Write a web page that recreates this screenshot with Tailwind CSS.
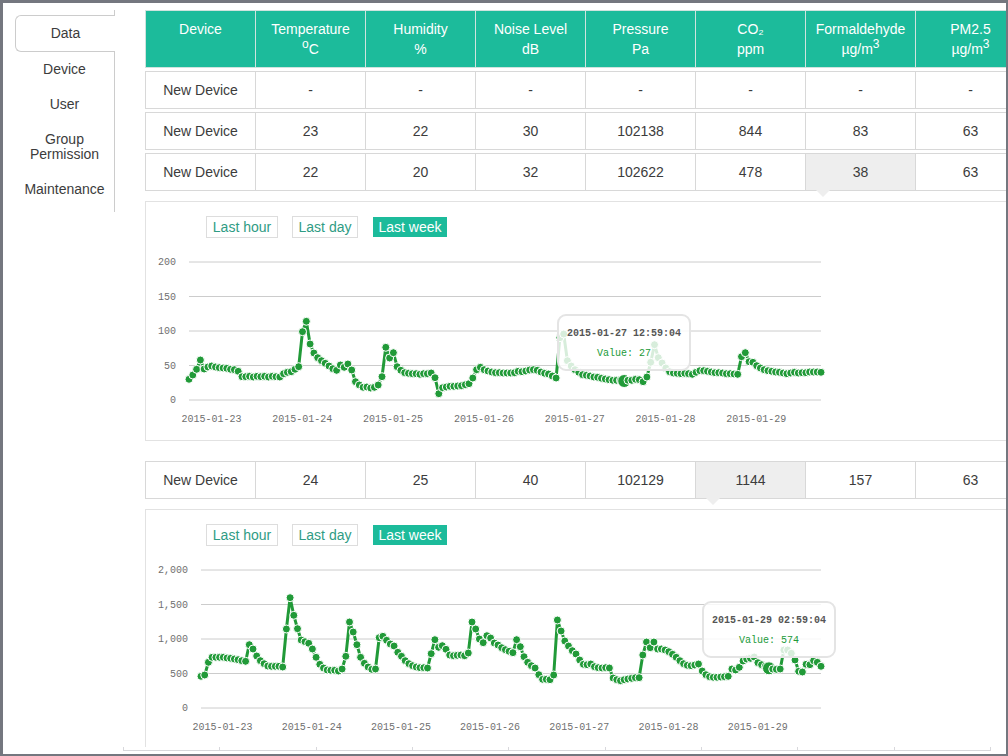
<!DOCTYPE html>
<html lang="en">
<head>
<meta charset="utf-8">
<title>Device data</title>
<script src="https://cdn.jsdelivr.net/npm/@tailwindcss/browser@4"></script>
</head>
<body class="flex min-h-screen items-start overflow-x-hidden border-t-3 border-r-2 border-b-2 border-l-3 border-[#74777f] bg-white font-['Liberation_Sans',Arial,sans-serif] text-sm text-[#3c3c3c]">

<nav class="mt-[7px] ml-3 flex w-[100px] shrink-0 flex-col text-center leading-[15px]" aria-label="Sections">
  <span class="h-[5px] border-r border-[#ccc]"></span>
  <a href="#data" aria-current="page" class="rounded-l-md border border-r-0 border-[#ccc] py-2.5">Data</a>
  <a href="#device" class="border-r border-[#ccc] py-2.5">Device</a>
  <a href="#user" class="border-r border-[#ccc] py-2.5">User</a>
  <a href="#group" class="border-r border-[#ccc] py-2.5">Group<br>Permission</a>
  <a href="#maintenance" class="border-r border-[#ccc] py-2.5">Maintenance</a>
  <span class="h-[5px] border-r border-[#ccc]"></span>
</nav>

<main class="min-w-0 flex-1 overflow-hidden pt-1 pl-2">
  <div class="pl-[22px]">
    <table class="w-[880px] table-fixed border-separate border-spacing-x-0 border-spacing-y-[3px] text-center leading-5">
      <thead>
        <tr class="h-[58px] bg-[#1cbb9b] align-top text-white *:border-y *:border-l *:border-[#cfe3de] *:px-0 *:py-2 *:font-normal">
          <th>Device</th>
          <th>Temperature<br><sup class="text-xs leading-none">o</sup>C</th>
          <th>Humidity<br>%</th>
          <th>Noise Level<br>dB</th>
          <th>Pressure<br>Pa</th>
          <th>CO₂<br>ppm</th>
          <th>Formaldehyde<br>µg/m<sup class="text-xs leading-none">3</sup></th>
          <th>PM2.5<br>µg/m<sup class="text-xs leading-none">3</sup></th>
        </tr>
      </thead>
      <tbody>
        <tr class="h-[38px] *:border-y *:border-l *:border-[#d8d8d8]">
          <td>New Device</td><td>-</td><td>-</td><td>-</td><td>-</td><td>-</td><td>-</td><td>-</td>
        </tr>
        <tr class="h-[38px] *:border-y *:border-l *:border-[#d8d8d8]">
          <td>New Device</td><td>23</td><td>22</td><td>30</td><td>102138</td><td>844</td><td>83</td><td>63</td>
        </tr>
        <tr class="h-[38px] *:border-y *:border-l *:border-[#d8d8d8]">
          <td>New Device</td><td>22</td><td>20</td><td>32</td><td>102622</td><td>478</td>
          <td class="relative bg-[#eee]">38<svg class="absolute top-full left-2.5 h-[7px] w-3.5" viewBox="0 0 14 7" aria-hidden="true"><path d="M0 0H14L7 7Z" fill="#eee"/></svg></td>
          <td>63</td>
        </tr>
      </tbody>
    </table>

    <section class="mt-[7px] w-[880px] border-y border-l border-[#e2e2e2] pt-3.5" aria-label="Formaldehyde history">
      <div class="flex gap-3.5 pl-[60px] leading-5">
        <button type="button" class="w-[72px] border border-[#ddd] text-[#2f9c84]">Last hour</button>
        <button type="button" class="w-[66px] border border-[#ddd] text-[#2f9c84]">Last day</button>
        <button type="button" class="w-[76px] border border-white bg-[#1cbb9b] text-white">Last week</button>
      </div>
      <svg id="chart-hcho" class="block h-[202px] w-[700px] font-['Liberation_Mono',monospace] text-[10px]" viewBox="146 238 700 202" role="img" aria-label="Formaldehyde, last week"></svg>
    </section>

    <table class="mt-[17px] w-[880px] table-fixed border-separate border-spacing-x-0 border-spacing-y-[3px] text-center leading-5">
      <tbody>
        <tr class="h-[38px] *:border-y *:border-l *:border-[#d8d8d8]">
          <td>New Device</td><td>24</td><td>25</td><td>40</td><td>102129</td>
          <td class="relative bg-[#eee]">1144<svg class="absolute top-full left-2.5 h-[7px] w-3.5" viewBox="0 0 14 7" aria-hidden="true"><path d="M0 0H14L7 7Z" fill="#eee"/></svg></td>
          <td>157</td><td>63</td>
        </tr>
      </tbody>
    </table>

    <section class="mt-[7px] w-[880px] border-t border-l border-[#e2e2e2] pt-3.5" aria-label="CO₂ history">
      <div class="flex gap-3.5 pl-[60px] leading-5">
        <button type="button" class="w-[72px] border border-[#ddd] text-[#2f9c84]">Last hour</button>
        <button type="button" class="w-[66px] border border-[#ddd] text-[#2f9c84]">Last day</button>
        <button type="button" class="w-[76px] border border-white bg-[#1cbb9b] text-white">Last week</button>
      </div>
      <svg id="chart-co2" class="block h-[201px] w-[700px] font-['Liberation_Mono',monospace] text-[10px]" viewBox="146 546 700 201" role="img" aria-label="CO₂, last week"></svg>
    </section>
  </div>
  <div class="mr-[15px] mb-[3px] grid h-1 grid-cols-9 border-r border-b border-[#d8d8dc] *:border-l *:border-[#d8d8dc]">
    <span></span><span></span><span></span><span></span><span></span><span></span><span></span><span></span><span></span>
  </div>
</main>

<script>
function draw(id, c) {
  const out = [];
  c.ticks.forEach((label, k) => {
    const y = c.base - 34.5 * k;
    out.push(`<line x1="${c.left}" x2="821" y1="${y}" y2="${y}" stroke="#ccc"/>`);
    out.push(`<text x="${c.labelEnd}" y="${Math.round(y) + 3}" text-anchor="end" fill="#707070">${label}</text>`);
  });
  for (let d = 0; d < 7; d++) {
    out.push(`<text x="${c.day0 + c.dayStep * d}" y="${c.base + 22}" text-anchor="middle" fill="#707070">2015-01-${23 + d}</text>`);
  }
  const step = (821 - c.left) / (c.ys.length - 1);
  const pts = c.ys.map((y, i) => [(c.left + i * step).toFixed(1), y]);
  out.push(`<polyline points="${pts.join(' ')}" fill="none" stroke="#219a38" stroke-width="3" stroke-linejoin="round"/>`);
  pts.forEach(([x, y], i) => {
    out.push(`<circle cx="${x}" cy="${y}" r="${i === c.hover ? 6.5 : 4}" fill="#219a38" stroke="#fff"/>`);
  });
  const t = c.tip;
  out.push(`<rect x="${t.x}" y="${t.y}" width="132" height="55" rx="8" fill="#fff" fill-opacity=".82" stroke="#e4e4e4" stroke-width="2"/>`);
  out.push(`<text x="${t.x + 66}" y="${t.y + 21}" text-anchor="middle" font-weight="bold" fill="#555">${t.time}</text>`);
  out.push(`<text x="${t.x + 66}" y="${t.y + 41}" text-anchor="middle" fill="#219a38">Value: ${t.value}</text>`);
  document.getElementById(id).innerHTML = out.join('');
}

draw('chart-hcho', {
  base: 400, left: 189, labelEnd: 176, day0: 211.5, dayStep: 90.8, hover: 115,
  ticks: ['0', '50', '100', '150', '200'],
  tip: { x: 558, y: 315, time: '2015-01-27 12:59:04', value: 27 },
  ys: [379.3,375,369.3,360,369,367,366,367,367.7,368,368.3,369.3,369.7,371.3,376.7,376.7,376.3,377,376.3,376.7,376.3,377,376.3,376.7,377,373.7,372.3,371.7,369.3,366.7,
    331.7,321.3,344,353,357.7,360.7,363.3,366,368.7,370.3,365,367.3,364,370,381.7,385,387.3,387,388,387.3,385,376.7,347.3,358,352.7,366.7,370.3,372.7,373.3,373.7,
    373.7,374.3,373.7,373.7,373,377.7,393.7,387.7,387,386.3,386.3,386,385.7,384.7,383.7,378,369.7,367.3,369.7,371,372,372.7,372.7,373,373,373,372.7,371.3,371.7,371,
    370,369.7,370.3,372,373.3,374,376,378,337.7,334,360.7,366,369.7,372.3,374.7,375.3,376,377,377.3,378.3,379,379.7,380.3,380.3,380.3,381,380.3,380.3,379.3,379.7,
    381.7,377,362.3,344.7,357.7,363,368,371.7,373,373.3,373.7,373.3,373.7,374.3,372.3,370.7,370.7,371.3,372,372.7,372.7,373,373.7,373.7,374,374.3,356.7,352.7,361.7,362.3,
    365.7,368,369.7,370.7,371.3,372,372.3,373,373.7,373,372.3,373,372.7,372.7,372,372,372,372.3]
});

draw('chart-co2', {
  base: 708, left: 201, labelEnd: 188, day0: 222.5, dayStep: 89.2, hover: 153,
  ticks: ['0', '500', '1,000', '1,500', '2,000'],
  tip: { x: 703, y: 602, time: '2015-01-29 02:59:04', value: 574 },
  ys: [676.3,675,662.3,657.3,657.3,657.3,657.3,658,658.3,659,659.7,660.7,661.3,644.7,649,656,660.7,663.7,666,666.3,666.3,666.3,667,629,597.7,615.3,628.7,640,641.7,643.3,
    649,657.3,664.3,668,670,670.3,670.3,671,669,656.3,622,632,644.7,657.3,663.3,667,669.3,669,637.7,636.3,640.3,644,646,652.3,656.3,660.7,663.7,665.7,667,667.7,
    667.7,668,653.7,639.7,647.3,645.7,649.3,655,655.7,655.3,655,655.7,653,622,629,639,642.7,635.7,638,643,645,647.7,649.7,651.3,652.7,639.7,646.7,656.7,662.3,665.7,
    668,674.7,679.3,679.3,679.7,675,620,631,641,646,650.7,654,660,664.3,664.7,664,666.7,667.7,668,667.7,668,678,679.7,680.7,679.7,679,678.3,677.7,677.7,655,
    642,647.7,642,649,649,650,651.7,654.3,657.3,660.7,663.7,665.3,665.7,665,664,671,674.7,676.7,677.3,677.3,677,676.7,676.3,669,670,667.3,661,659,658.3,657,
    662.7,664.7,666.3,668.3,669,669.3,669,650,650,653.3,660,671.3,672,664.3,664.7,660.7,662.3,666.3]
});
</script>
</body>
</html>
